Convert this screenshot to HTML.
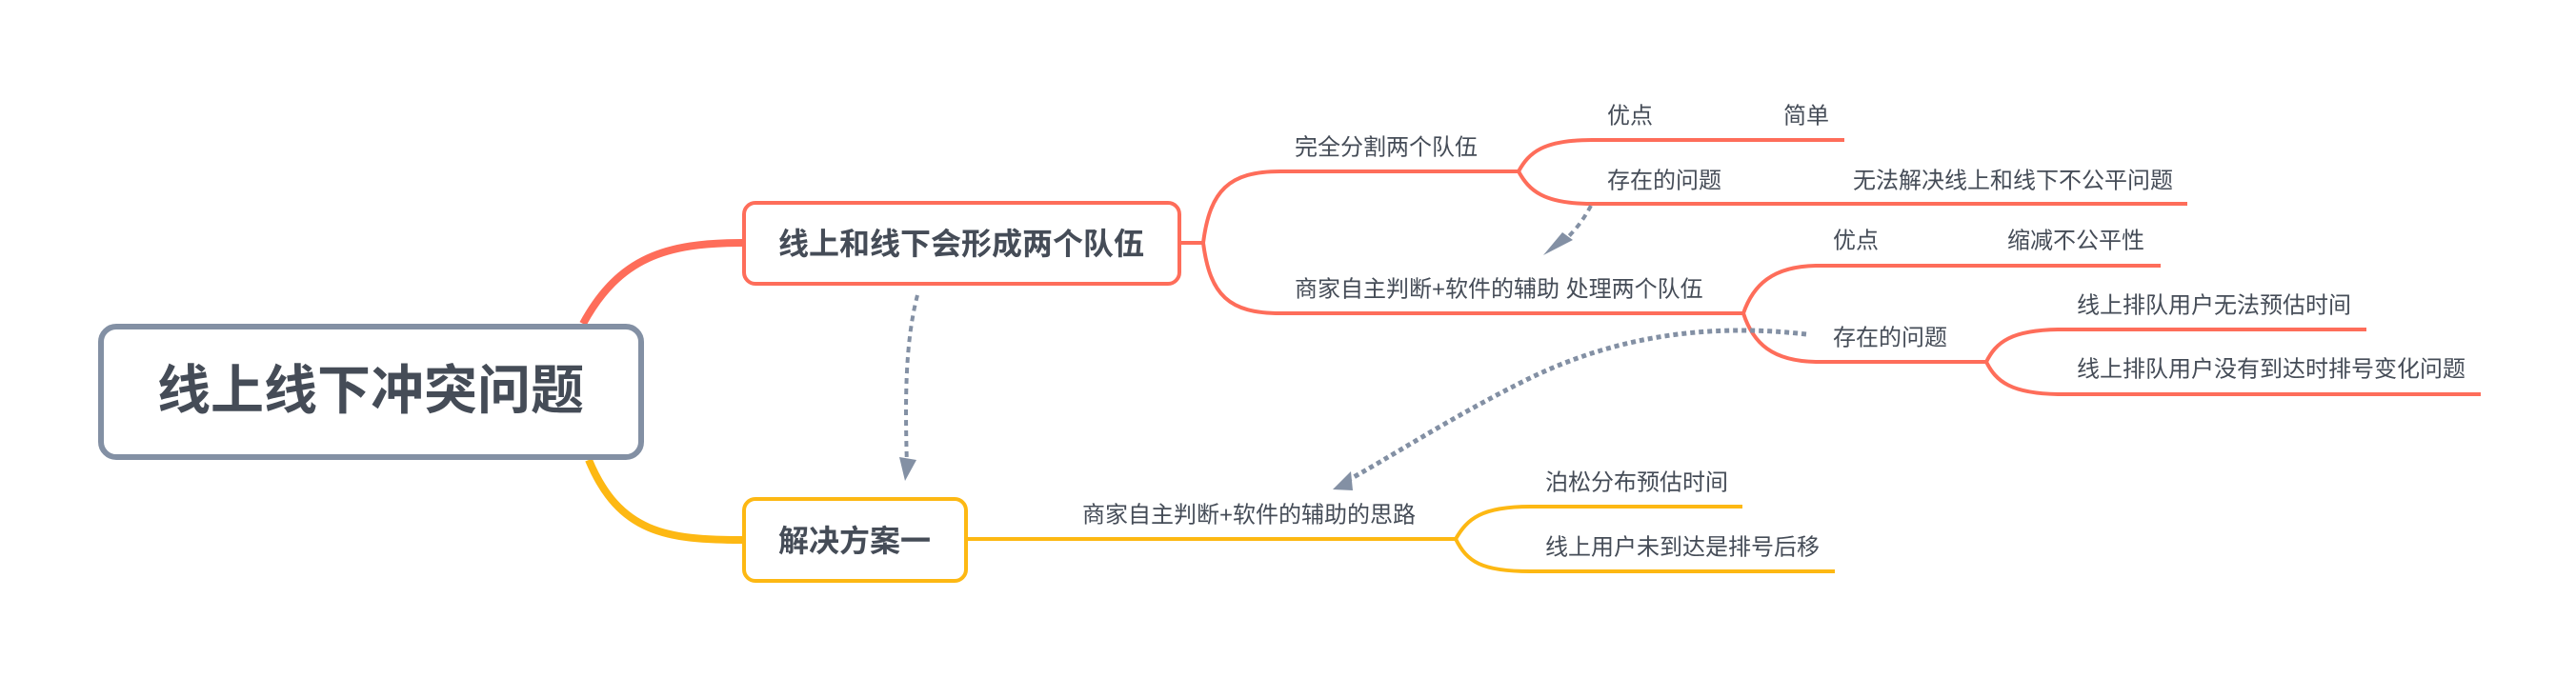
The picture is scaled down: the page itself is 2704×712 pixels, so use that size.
<!DOCTYPE html>
<html><head><meta charset="utf-8"><style>
html,body{margin:0;padding:0;background:#fff;}
svg{display:block}
text{font-family:"Liberation Sans","Noto Sans CJK SC",sans-serif;fill:#454c57;}
.s{font-size:24px;dominant-baseline:central}
.b{font-weight:bold;dominant-baseline:central}
</style></head><body>
<svg width="2704" height="712" viewBox="0 0 2704 712" xmlns="http://www.w3.org/2000/svg">
<g fill="none" stroke-linecap="butt">
<!-- root to branches -->
<path d="M612 340 C650 270 700 255 779 255" stroke="#fe6d5a" stroke-width="8"/>
<path d="M618 483 C650 560 700 567 779 567" stroke="#fdb813" stroke-width="8"/>
<!-- coral subtree -->
<path d="M1240 255 H1263" stroke="#fe6d5a" stroke-width="4"/>
<path d="M1263 255 C1270 200 1290 180 1344 180 H1594" stroke="#fe6d5a" stroke-width="4"/>
<path d="M1263 255 C1270 310 1290 329 1344 329 H1830" stroke="#fe6d5a" stroke-width="4"/>
<path d="M1594 180 C1605 160 1620 147 1671 147 H1936" stroke="#fe6d5a" stroke-width="4"/>
<path d="M1594 180 C1605 200 1620 214 1671 214 H2296" stroke="#fe6d5a" stroke-width="4"/>
<path d="M1830 329 C1840 300 1860 279 1909 279 H2268" stroke="#fe6d5a" stroke-width="4"/>
<path d="M1830 329 C1840 360 1860 380 1909 380 H2085" stroke="#fe6d5a" stroke-width="4"/>
<path d="M2085 380 C2095 360 2110 346 2165 346 H2484" stroke="#fe6d5a" stroke-width="4"/>
<path d="M2085 380 C2095 400 2110 414 2165 414 H2604" stroke="#fe6d5a" stroke-width="4"/>
<!-- yellow subtree -->
<path d="M1016 566 H1528" stroke="#fdb813" stroke-width="4"/>
<path d="M1528 566 C1540 545 1555 532 1606 532 H1829" stroke="#fdb813" stroke-width="4"/>
<path d="M1528 566 C1540 590 1555 600 1606 600 H1926" stroke="#fdb813" stroke-width="4"/>
<!-- dotted connectors -->
<path d="M963 310 C950 360 950 420 952 490" stroke="#8390a4" stroke-width="4" stroke-dasharray="6 5"/>
<path d="M1670 216 C1660 235 1650 245 1640 255" stroke="#8390a4" stroke-width="4" stroke-dasharray="6 5"/>
<path d="M1896 351 C1800 340 1700 350 1600 400 C1520 440 1460 480 1410 507" stroke="#8390a4" stroke-width="5" stroke-dasharray="5 4"/>
</g>
<polygon points="944,480 962,483 950,505" fill="#8390a4"/>
<polygon points="1640,244 1651,252 1620,268" fill="#8390a4"/>
<polygon points="1418,495 1420,515 1399,514" fill="#8390a4"/>
<!-- boxes -->
<rect x="106" y="343" width="567" height="137" rx="16" fill="#fff" stroke="#8390a4" stroke-width="6"/>
<text class="b" x="389" y="410" font-size="56" text-anchor="middle">线上线下冲突问题</text>
<rect x="781" y="213" width="457" height="85" rx="12" fill="#fff" stroke="#fe6d5a" stroke-width="4"/>
<text class="b" x="1009" y="256" font-size="32" text-anchor="middle">线上和线下会形成两个队伍</text>
<rect x="781" y="524" width="233" height="86" rx="12" fill="#fff" stroke="#fdb813" stroke-width="4"/>
<text class="b" x="897" y="568" font-size="32" text-anchor="middle">解决方案一</text>
<!-- labels -->
<text class="s" x="1359" y="155">完全分割两个队伍</text>
<text class="s" x="1687" y="122">优点</text>
<text class="s" x="1872" y="122">简单</text>
<text class="s" x="1687" y="190">存在的问题</text>
<text class="s" x="1945" y="190">无法解决线上和线下不公平问题</text>
<text class="s" x="1359" y="304">商家自主判断+软件的辅助 处理两个队伍</text>
<text class="s" x="1924" y="253">优点</text>
<text class="s" x="2107" y="253">缩减不公平性</text>
<text class="s" x="1924" y="355">存在的问题</text>
<text class="s" x="2180" y="321">线上排队用户无法预估时间</text>
<text class="s" x="2180" y="388">线上排队用户没有到达时排号变化问题</text>
<text class="s" x="1136" y="541">商家自主判断+软件的辅助的思路</text>
<text class="s" x="1622" y="507">泊松分布预估时间</text>
<text class="s" x="1622" y="575">线上用户未到达是排号后移</text>
</svg>
</body></html>
